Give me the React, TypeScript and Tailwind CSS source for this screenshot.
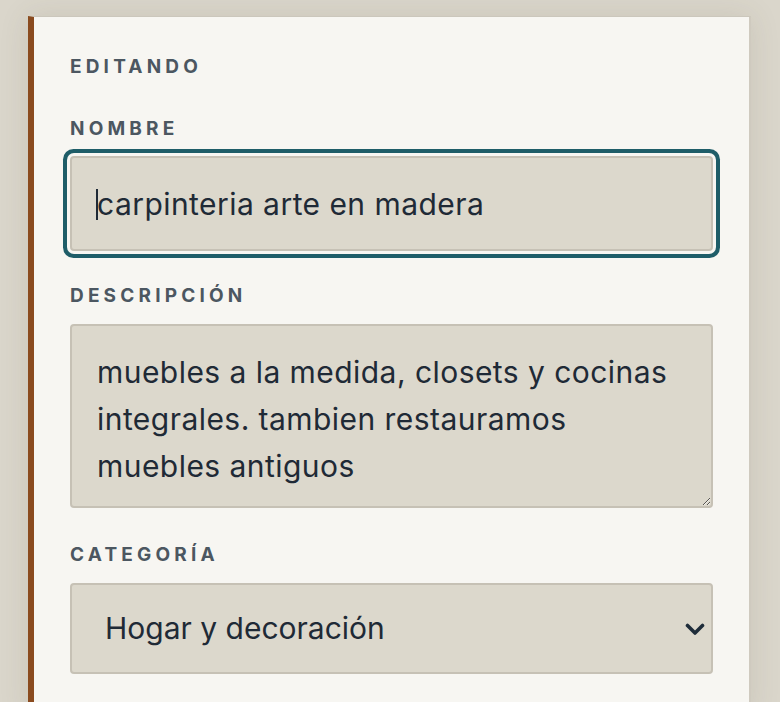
import React from "react";

const labelCls =
  "block text-[19px] leading-[20px] font-bold uppercase tracking-[0.22em] text-[#4c5761]";

const fieldCls =
  "block w-full rounded-[4px] border-2 border-[#c6c1b5] bg-[#dcd8cc] text-[30px] tracking-[0.015em] text-[#1f2a36] outline-none";

export default function App() {
  return (
    <div
      className="min-h-[702px] bg-[#dad6cb] pl-[28px] pr-[29px] pt-[16px] overflow-hidden"
      style={{ fontFamily: "Inter, 'Noto Sans', sans-serif" }}
    >
      <div className="min-h-[700px] border-l-[6px] border-t border-r-2 border-l-[#8a4b1f] border-t-[#cbc7bc] border-r-[#cfcabf] bg-[#f7f6f2] px-[36px] pt-[40px] shadow-[0_0_28px_rgba(90,80,60,0.12)]">
        <div className={labelCls}>Editando</div>

        <label className={labelCls + " mt-[42px] mb-[17px]"}>Nombre</label>
        <div className="relative">
          <input
            readOnly
            defaultValue="carpinteria arte en madera"
            className={
              fieldCls +
              " h-[95px] px-[25px] shadow-[0_0_0_3px_#f7f6f2,0_0_0_7px_#1e5d68]"
            }
          />
          <span className="absolute left-[26px] top-[33px] h-[31px] w-[2px] bg-[#1f2a36]" />
        </div>

        <label className={labelCls + " mt-[35px] mb-[18px]"}>Descripción</label>
        <textarea
          readOnly
          defaultValue="muebles a la medida, closets y cocinas integrales. tambien restauramos muebles antiguos"
          className={fieldCls + " h-[184px] px-[25px] pt-[23px] leading-[47px]"}
        />

        <label className={labelCls + " mt-[37px] mb-[18px]"}>Categoría</label>
        <div className="relative">
          <select
            defaultValue="hogar"
            className={fieldCls + " h-[91px] appearance-none pl-[33px] pr-[60px] text-[29.5px] tracking-normal"}
          >
            <option value="hogar">Hogar y decoración</option>
            <option value="servicios">Servicios</option>
          </select>
          <svg
            className="pointer-events-none absolute right-[8px] top-[40px]"
            width="20"
            height="13"
            viewBox="0 0 20 13"
            fill="none"
          >
            <path
              d="M2.5 2.5 L10 10 L17.5 2.5"
              stroke="#1f2d3a"
              strokeWidth="3.6"
              strokeLinecap="round"
              strokeLinejoin="round"
            />
          </svg>
        </div>
      </div>
    </div>
  );
}
